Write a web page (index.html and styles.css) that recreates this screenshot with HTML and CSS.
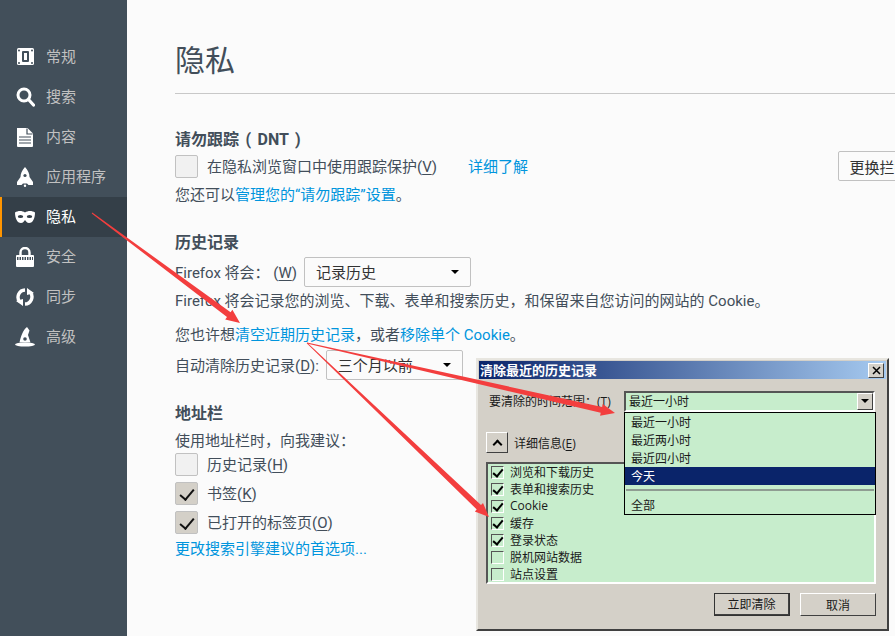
FILE: index.html
```html
<!DOCTYPE html>
<html lang="zh-CN">
<head>
    <meta charset="UTF-8">
    <title>隐私</title>
    <link rel="stylesheet" href="styles.css">
</head>
<body>
    <div class="app">
        <nav class="sidebar">
            <a class="nav-item">
                <svg class="nav-icon" viewBox="0 0 20 20"><rect x="2" y="1" width="17" height="17" rx="1.5" fill="#fff"/><rect x="7" y="4" width="7" height="11" rx="1" fill="#424f5a"/><rect x="9" y="6" width="3" height="7" fill="#fff"/><g fill="#424f5a"><circle cx="4" cy="3.5" r="1"/><circle cx="17" cy="3.5" r="1"/><circle cx="4" cy="16" r="1"/><circle cx="17" cy="16" r="1"/></g></svg>
                <span>常规</span>
            </a>
            <a class="nav-item">
                <svg class="nav-icon" viewBox="0 0 20 20"><circle cx="9" cy="8" r="6" fill="none" stroke="#fff" stroke-width="3"/><path d="M13.5 12.5L18.5 18" stroke="#fff" stroke-width="3.2" stroke-linecap="round"/></svg>
                <span>搜索</span>
            </a>
            <a class="nav-item">
                <svg class="nav-icon" viewBox="0 0 20 20"><path d="M2 1h10.500l5.500 5.500v12.500a1 1 0 0 1-1 1h-14a1 1 0 0 1-1-1z" fill="#fff"/><path d="M12 1.500v5.500h5.500M4 10h12M4 13h12M4 16h12" fill="none" stroke="#424f5a" stroke-width="1.200"/></svg>
                <span>内容</span>
            </a>
            <a class="nav-item">
                <svg class="nav-icon" viewBox="0 0 20 20"><path d="M10 0C13 3 14.500 7 14.500 10L18 15V18H13.500L12 16.500H8L6.500 18H2V15L5.500 10C5.500 7 7 3 10 0z" fill="#fff"/><circle cx="10" cy="8.500" r="1.600" fill="#424f5a"/><circle cx="10" cy="18.800" r="1.200" fill="#fff"/></svg>
                <span>应用程序</span>
            </a>
            <a class="nav-item active">
                <svg class="nav-icon" viewBox="0 0 20 20"><path d="M0 5.500C3 3.500 7 3.500 10 5.500C13 3.500 17 3.500 20 5.500C20 11 18 16 14 16C12 16 11 14 10 13C9 14 8 16 6 16C2 16 0 11 0 5.500z" fill="#fff"/><ellipse cx="5.500" cy="9.500" rx="2.700" ry="1.600" fill="#343f48"/><ellipse cx="14.500" cy="9.500" rx="2.700" ry="1.600" fill="#343f48"/></svg>
                <span>隐私</span>
            </a>
            <a class="nav-item">
                <svg class="nav-icon" viewBox="0 0 20 20"><path d="M5.500 9V5.500a4.500 4.500 0 0 1 9 0V9" fill="none" stroke="#fff" stroke-width="2.400"/><rect x="1" y="8" width="18" height="12" rx="1" fill="#fff"/><path d="M2 11.500H18" stroke="#424f5a" stroke-width="3" stroke-dasharray="1.500 1"/></svg>
                <span>安全</span>
            </a>
            <a class="nav-item">
                <svg class="nav-icon" viewBox="0 0 20 20"><g fill="none" stroke="#fff" stroke-width="3.400"><path d="M10 3A7.200 7.200 0 0 0 4.500 14.500"/><path d="M10 17A7.200 7.200 0 0 0 15.500 5.500"/></g><path d="M1 14L8 12V19zM19 6L12 8V1z" fill="#fff"/></svg>
                <span>同步</span>
            </a>
            <a class="nav-item">
                <svg class="nav-icon" viewBox="0 0 20 20"><path d="M12 0C8 3 6 9 4.500 15.500H15.500L13 8L14.500 3.500z" fill="#fff"/><ellipse cx="10" cy="17.500" rx="10" ry="2" fill="#fff"/><circle cx="10" cy="12" r="1.800" fill="#424f5a"/></svg>
                <span>高级</span>
            </a>
        </nav>

        <main class="content">
            <h1 class="page-title">隐私</h1>

            <section class="dnt-section">
                <h2 class="section-title">请勿跟踪 ( DNT )</h2>
                <div class="row dnt-row">
                    <span class="checkbox"></span>
                    <span class="label">在隐私浏览窗口中使用跟踪保护(<u>V</u>)</span>
                    <a class="link learn-more label">详细了解</a>
                    <button class="change-btn">更换拦截列表...</button>
                </div>
                <p class="line dnt-line">您还可以<a class="link">管理您的“请勿跟踪”设置</a>。</p>
            </section>

            <section class="history-section">
                <h2 class="section-title">历史记录</h2>
                <div class="row">
                    <span class="firefox-label label">Firefox 将会： (<u>W</u>)</span>
                    <div class="select history-select"><span class="label">记录历史</span><i class="caret"></i></div>
                </div>
                <p class="line will-line">Firefox 将会记录您的浏览、下载、表单和搜索历史，和保留来自您访问的网站的 Cookie。</p>
                <p class="line clear-line">您也许想<a class="link">清空近期历史记录</a>，或者<a class="link">移除单个 Cookie</a>。</p>
                <div class="row auto-row">
                    <span class="auto-label label">自动清除历史记录(<u>D</u>):</span>
                    <div class="select auto-select"><span class="label">三个月以前</span><i class="caret"></i></div>
                </div>
            </section>

            <section class="bar-section">
                <h2 class="section-title">地址栏</h2>
                <p class="line">使用地址栏时，向我建议：</p>
                <div class="check-list">
                    <div class="check-row"><span class="checkbox"></span><span class="label">历史记录(<u>H</u>)</span></div>
                    <div class="check-row"><span class="checkbox checked"></span><span class="label">书签(<u>K</u>)</span></div>
                    <div class="check-row"><span class="checkbox checked"></span><span class="label">已打开的标签页(<u>O</u>)</span></div>
                </div>
                <p class="line prefs-line"><a class="link">更改搜索引擎建议的首选项...</a></p>
            </section>
        </main>
    </div>

    <div class="dialog">
        <div class="titlebar">
            <span>清除最近的历史记录</span>
            <button class="close-btn">
                <svg viewBox="0 0 9 9" width="9" height="9"><path d="M1 1L8 8M8 1L1 8" stroke="#000" stroke-width="1.500"/></svg>
            </button>
        </div>
        <div class="dialog-body">
            <div class="range-row">
                <span class="range-label">要清除的时间范围：(<u>T</u>)</span>
                <div class="combo">
                    <span>最近一小时</span>
                    <span class="combo-btn"><i class="caret"></i></span>
                    <ul class="dropdown">
                        <li>最近一小时</li>
                        <li>最近两小时</li>
                        <li>最近四小时</li>
                        <li class="selected">今天</li>
                        <li class="separator"></li>
                        <li class="all-item">全部</li>
                    </ul>
                </div>
            </div>
            <div class="details-row">
                <button class="details-btn"><i class="caret-up"></i></button>
                <span>详细信息(<u>E</u>)</span>
            </div>
            <div class="item-list">
                <div class="item"><span class="mini-check checked"></span>浏览和下载历史</div>
                <div class="item"><span class="mini-check checked"></span>表单和搜索历史</div>
                <div class="item"><span class="mini-check checked"></span>Cookie</div>
                <div class="item"><span class="mini-check checked"></span>缓存</div>
                <div class="item"><span class="mini-check checked"></span>登录状态</div>
                <div class="item"><span class="mini-check"></span>脱机网站数据</div>
                <div class="item"><span class="mini-check"></span>站点设置</div>
            </div>
            <div class="dialog-actions">
                <button class="win-btn default">立即清除</button>
                <button class="win-btn">取消</button>
            </div>
        </div>
    </div>

    <!-- red annotation arrows drawn on top of the screenshot -->
    <svg class="arrows" viewBox="0 0 895 636" width="895" height="636">
        <polygon points="92.300,212.600 230.600,312.200 232.400,309.800 240,323 225.200,319.400 227,317 91.700,213.400"/>
        <polygon points="307.100,342.500 602.100,407 602.700,404.100 615,413 600.100,415.700 600.700,412.800 306.900,343.500"/>
        <polygon points="307.350,342.640 481,505.100 483,503 489,517 474.800,511.600 476.800,509.500 306.650,343.360"/>
    </svg>
</body>
</html>
```

FILE: styles.css
```css
* {
    box-sizing: border-box;
}

html, body {
    margin: 0;
    height: 636px;
    overflow: hidden;
}

body {
    position: relative;
    background-color: #fbfbfb;
    font-family: Roboto, "Noto Sans CJK SC", sans-serif;
    font-size: 15px;
    color: #424e5a;
}

u {
    text-underline-offset: 2px;
}

.app {
    display: flex;
    height: 636px;
}

/* sidebar */
.sidebar {
    flex: 0 0 127px;
    padding-top: 37px;
    background-color: #424f5a;
}

.nav-item {
    display: flex;
    align-items: center;
    gap: 11px;
    height: 40px;
    padding-left: 15px;
    color: #c1c1c1;
}

.nav-item span {
    padding-bottom: 3px;
}

.nav-item.active {
    padding-left: 13px;
    border-left: 2px solid #ff9500;
    background-color: #343f48;
    color: #fff;
}

.nav-icon {
    width: 20px;
    height: 20px;
}

/* main pane */
.content {
    flex: 1;
    min-width: 0;
    padding-left: 48px;
    overflow: hidden;
}

.page-title {
    height: 94px;
    margin: 0;
    padding-top: 41px;
    border-bottom: 1px solid #c8c8c8;
    font-size: 30px;
    font-weight: 400;
    line-height: 40px;
}

.section-title {
    height: 24px;
    margin: 0;
    padding-top: 2px;
    font-size: 16px;
    font-weight: 700;
    line-height: 22px;
    word-spacing: 2.5px;
}

.dnt-section {
    margin-top: 33px;
}

.history-section {
    margin-top: 24px;
}

.history-section .section-title,
.bar-section .section-title {
    margin-bottom: 3px;
}

.bar-section {
    margin-top: 21px;
}

.row {
    display: flex;
    align-items: center;
    gap: 9px;
    height: 30px;
    white-space: nowrap;
}

.label {
    padding-bottom: 2px;
}

.dnt-row {
    margin-right: -68px;
}

.firefox-label {
    flex: 0 0 120px;
}

.auto-label {
    flex: 0 0 142px;
}

.line {
    height: 24px;
    margin: 0;
    padding-top: 2px;
    line-height: 22px;
    white-space: nowrap;
}

.dnt-line {
    margin-top: 1px;
}

.will-line {
    margin-top: 1px;
}

.clear-line {
    margin-top: 10px;
}

.prefs-line {
    margin-top: 2px;
}

.auto-row {
    margin-top: 4px;
}

.link {
    color: #0095dd;
}

.learn-more {
    margin-left: 22px;
}

.change-btn {
    flex: 0 0 125px;
    height: 30px;
    margin-left: auto;
    padding: 0 10px;
    border: 1px solid #c1c1c1;
    border-radius: 2px;
    background-color: #fbfbfb;
    font: inherit;
    color: #333;
    white-space: nowrap;
}

.checkbox {
    position: relative;
    flex: 0 0 23px;
    width: 23px;
    height: 23px;
    border: 1px solid #c1c1c1;
    border-radius: 2px;
    background-color: #f1f1f1;
}

.checkbox.checked {
    background-color: #d4d0c8;
}

.checkbox.checked::after {
    content: "";
    position: absolute;
    left: 7px;
    top: 3px;
    width: 6px;
    height: 12px;
    border-right: 2.5px solid #111;
    border-bottom: 2.5px solid #111;
    transform: rotate(40deg);
}

.select {
    display: flex;
    align-items: center;
    justify-content: space-between;
    height: 30px;
    padding: 0 11px;
    border: 1px solid #c1c1c1;
    border-radius: 2px;
    color: #333;
}

.history-select {
    width: 167px;
    margin-left: -2px;
}

.auto-select {
    width: 137px;
    margin-left: -2px;
}

.caret {
    width: 0;
    height: 0;
    border-left: 4px solid transparent;
    border-right: 4px solid transparent;
    border-top: 4px solid #000;
}

.check-list {
    display: flex;
    flex-direction: column;
    gap: 6px;
    margin-top: 1px;
}

.check-row {
    display: flex;
    align-items: center;
    gap: 9px;
    height: 23px;
}

/* dialog over the page */
.dialog {
    position: absolute;
    left: 476px;
    top: 358px;
    width: 413px;
    height: 273px;
    padding: 1px;
    border: 2px solid;
    border-color: #e8e6e0 #404040 #404040 #e8e6e0;
    background-color: #d4d0c8;
    font-family: "Open Sans", "Noto Sans CJK SC", sans-serif;
    font-size: 12px;
    color: #1a1a1a;
}

.titlebar {
    display: flex;
    align-items: center;
    justify-content: space-between;
    height: 18px;
    padding: 0 2px 0 1px;
    background: linear-gradient(to right, #0a246a, #a6caf0);
    font-size: 13px;
    font-weight: 700;
    color: #fff;
}

.titlebar span {
    padding-bottom: 2px;
}

.close-btn,
.details-btn,
.win-btn,
.combo-btn {
    border: 1px solid;
    border-color: #fff #404040 #404040 #fff;
    background-color: #d4d0c8;
    padding: 0;
}

.close-btn {
    display: flex;
    align-items: center;
    justify-content: center;
    width: 16px;
    height: 15px;
}

.dialog-body {
    padding: 12px 10px 0 7px;
}

.range-row {
    display: flex;
    height: 20px;
    align-items: center;
}

.range-label {
    flex: 0 0 138px;
    padding-left: 3px;
    white-space: nowrap;
}

.combo {
    position: relative;
    display: flex;
    align-items: center;
    justify-content: space-between;
    width: 251px;
    height: 21px;
    padding-left: 3px;
    border: 2px solid;
    border-color: #555 #fff #fff #555;
    background-color: #c7edcc;
}

.combo-btn {
    display: flex;
    align-items: center;
    justify-content: center;
    width: 16px;
    height: 17px;
}

.dropdown {
    position: absolute;
    left: -2px;
    top: 19px;
    width: 252px;
    margin: 0;
    padding: 0;
    list-style: none;
    border: 1px solid #000;
    background-color: #c7edcc;
}

.dropdown li {
    height: 18px;
    padding-left: 6px;
    line-height: 20px;
}

.dropdown .selected {
    background-color: #0a246a;
    color: #fff;
}

.dropdown .separator {
    height: 2px;
    margin: 4px 1px 0;
    padding: 0;
    background-color: #8f9d92;
}

.dropdown .all-item {
    height: 19px;
    margin-top: 4px;
    line-height: 22px;
}

.details-row {
    display: flex;
    align-items: center;
    gap: 6px;
    height: 21px;
    margin-top: 21px;
}

.details-btn {
    display: flex;
    align-items: center;
    justify-content: center;
    width: 22px;
    height: 21px;
}

.caret-up {
    width: 7px;
    height: 7px;
    margin-top: 4px;
    border-left: 2px solid #000;
    border-top: 2px solid #000;
    transform: rotate(45deg);
}

.item-list {
    height: 122px;
    margin-top: 9px;
    border: 2px solid;
    border-color: #555 #fff #fff #555;
    background-color: #c7edcc;
}

.item {
    display: flex;
    align-items: center;
    gap: 6px;
    height: 17px;
    padding: 0 0 2px 3px;
    white-space: nowrap;
}

.mini-check {
    position: relative;
    flex: 0 0 13px;
    width: 13px;
    height: 13px;
    margin-top: 2px;
    border: 1px solid;
    border-color: #555 #fff #fff #555;
}

.mini-check.checked::after {
    content: "";
    position: absolute;
    left: 3px;
    top: 0;
    width: 4px;
    height: 8px;
    border-right: 2px solid #000;
    border-bottom: 2px solid #000;
    transform: rotate(40deg);
}

.dialog-actions {
    display: flex;
    justify-content: flex-end;
    gap: 10px;
    margin-top: 9px;
}

.win-btn {
    width: 76px;
    height: 23px;
    font: inherit;
    color: #1a1a1a;
}

.win-btn.default {
    outline: 1px solid #333;
    outline-offset: -1px;
    border-width: 1px 2px 2px 1px;
}

.arrows {
    position: absolute;
    left: 0;
    top: 0;
    fill: #f33e3e;
    pointer-events: none;
}
```
